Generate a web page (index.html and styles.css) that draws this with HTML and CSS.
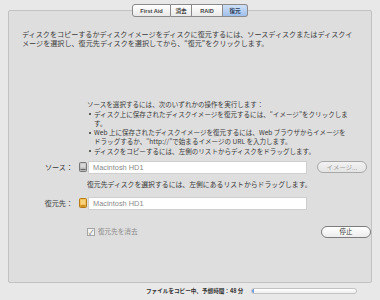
FILE: index.html
```html
<!DOCTYPE html>
<html lang="ja">
<head>
    <meta charset="UTF-8">
    <title>ディスクユーティリティ - 復元</title>
    <link rel="stylesheet" href="styles.css">
</head>
<body>
    <div class="window">
        <div class="tabs">
            <span class="tab">First Aid</span>
            <span class="tab">消去</span>
            <span class="tab">RAID</span>
            <span class="tab selected">復元</span>
        </div>

        <div class="panel">
            <p class="intro">ディスクをコピーするかディスクイメージをディスクに復元するには、ソースディスクまたはディスクイ<br>メージを選択し、復元先ディスクを選択してから、“復元”をクリックします。</p>

            <div class="help">
                <p>ソースを選択するには、次のいずれかの操作を実行します：</p>
                <ul>
                    <li>ディスク上に保存されたディスクイメージを復元するには、“イメージ”をクリックしま<br>す。</li>
                    <li>Web 上に保存されたディスクイメージを復元するには、Web ブラウザからイメージを<br>ドラッグするか、“http://”で始まるイメージの URL を入力します。</li>
                    <li>ディスクをコピーするには、左側のリストからディスクをドラッグします。</li>
                </ul>
            </div>

            <div class="row source-row">
                <span class="label">ソース：</span>
                <span class="disk-icon">
                    <svg width="8" height="10" viewBox="0 0 8 10">
                        <rect x="0.5" y="0.5" width="7" height="9" rx="1" fill="#b8b8b8" stroke="#777"/>
                        <rect x="1.5" y="1.5" width="5" height="4" fill="#d8d8d8"/>
                        <line x1="1.5" y1="7.5" x2="6.5" y2="7.5" stroke="#666"/>
                    </svg>
                </span>
                <span class="field">Macintosh HD1</span>
                <span class="button disabled">イメージ...</span>
            </div>

            <p class="hint">復元先ディスクを選択するには、左側にあるリストからドラッグします。</p>

            <div class="row dest-row">
                <span class="label">復元先：</span>
                <span class="disk-icon">
                    <svg width="8" height="10" viewBox="0 0 8 10">
                        <rect x="0.5" y="0.5" width="7" height="9" rx="1" fill="#f0b540" stroke="#b57a14"/>
                        <rect x="1.5" y="1.5" width="5" height="5" fill="#f7d27c"/>
                        <line x1="1.5" y1="8" x2="6.5" y2="8" stroke="#a8700f"/>
                    </svg>
                </span>
                <span class="field">Macintosh HD1</span>
            </div>

            <div class="row options-row">
                <label class="check">
                    <span class="box">✓</span>
                    復元先を消去
                </label>
                <span class="button">停止</span>
            </div>
        </div>

        <div class="status">
            <span class="status-text">ファイルをコピー中、予想時間：48 分</span>
            <span class="progress"><span class="progress-fill" style="width: 2%"></span></span>
        </div>
    </div>
</body>
</html>
```

FILE: styles.css
```css
body {
    margin: 0;
    background-color: #e8e8e8;
    color: #3a3a3a;
    font-family: "Noto Sans CJK JP", "Noto Sans", sans-serif;
    font-size: 7.1px;
}
.window {
    width: 380px;
    height: 300px;
    overflow: hidden;
}
.tabs {
    position: relative;
    z-index: 1;
    display: flex;
    justify-content: center;
    height: 13px;
    margin-top: 4px;
}
.tab {
    display: flex;
    align-items: center;
    justify-content: center;
    height: 11px;
    border: 1px solid #8a8a8a;
    border-left: none;
    background: linear-gradient(#ffffff, #e9e9e9);
    font-family: "Liberation Sans", "Noto Sans CJK JP", sans-serif;
    font-size: 5.6px;
    font-weight: bold;
    color: #444;
}
.tab:nth-child(1) { width: 37px; border-left: 1px solid #8a8a8a; border-radius: 3px 0 0 3px; }
.tab:nth-child(2) { width: 20px; }
.tab:nth-child(3) { width: 30px; }
.tab:nth-child(4) { width: 24px; border-radius: 0 3px 3px 0; }
.tab.selected {
    background: linear-gradient(#cfe0f7, #9fc0ec);
    color: #2a3a55;
}
.panel {
    height: 273px;
    margin: -7px 8px 0;
    border: 1px solid #c2c2c2;
    border-radius: 2px;
    background-color: #dedede;
    box-sizing: border-box;
    padding: 19px 0 0 13px;
    line-height: 9px;
}
p {
    margin: 0;
}
.intro {
    white-space: nowrap;
}
.help {
    margin: 52px 0 0 65px;
    white-space: nowrap;
    font-size: 6.55px;
}
.help ul {
    margin: 0;
    padding: 0;
    list-style: none;
}
.help li {
    position: relative;
    padding-left: 7px;
    margin-top: 0.5px;
}
.help li::before {
    content: "";
    position: absolute;
    left: 2px;
    top: 3.5px;
    width: 2px;
    height: 2px;
    border-radius: 1px;
    background-color: #333;
}
.row {
    display: flex;
    align-items: center;
}
.label {
    width: 51px;
    text-align: right;
}
.disk-icon {
    display: flex;
    margin: 0 1px 0 6px;
}
.field {
    display: flex;
    align-items: center;
    width: 219px;
    height: 13px;
    padding-left: 4px;
    background-color: #ffffff;
    border: 1px solid #cfcfcf;
    box-sizing: border-box;
    font-family: "Liberation Sans", sans-serif;
    font-size: 7.4px;
    color: #8a8a8a;
}
.button {
    display: flex;
    align-items: center;
    justify-content: center;
    width: 50px;
    height: 12px;
    margin-left: 10px;
    border: 1px solid #7c7c7c;
    border-radius: 6px;
    box-sizing: border-box;
    background: linear-gradient(#ffffff, #ececec);
    font-size: 6.4px;
    color: #333;
}
.button.disabled {
    border-color: #a8a8a8;
    color: #9a9a9a;
    background: linear-gradient(#f2f2f2, #e4e4e4);
}
.source-row {
    margin-top: 5px;
}
.hint {
    margin: 6px 0 0 65px;
    font-size: 6.85px;
}
.dest-row {
    margin-top: 8px;
}
.options-row {
    margin-top: 16px;
    padding-left: 65px;
}
.check {
    display: flex;
    align-items: center;
    width: 224px;
    color: #8c8c8c;
    font-size: 6.6px;
}
.box {
    display: flex;
    align-items: center;
    justify-content: center;
    width: 6px;
    height: 6px;
    margin-right: 3px;
    border: 1px solid #a5a5a5;
    background-color: #f4f4f4;
    font-size: 7px;
    line-height: 6px;
    color: #777;
}
.status {
    display: flex;
    align-items: center;
    height: 16px;
    padding-left: 146px;
}
.status-text {
    font-size: 5.6px;
    font-weight: bold;
    color: #333;
    width: 105px;
    white-space: nowrap;
}
.progress {
    display: block;
    width: 106px;
    height: 6px;
    border: 1px solid #c2c2c2;
    border-radius: 3px;
    box-sizing: border-box;
    background: linear-gradient(#ffffff, #eeeeee);
    overflow: hidden;
}
.progress-fill {
    display: block;
    height: 100%;
    min-width: 2px;
    background-color: #6b9be0;
}
```
